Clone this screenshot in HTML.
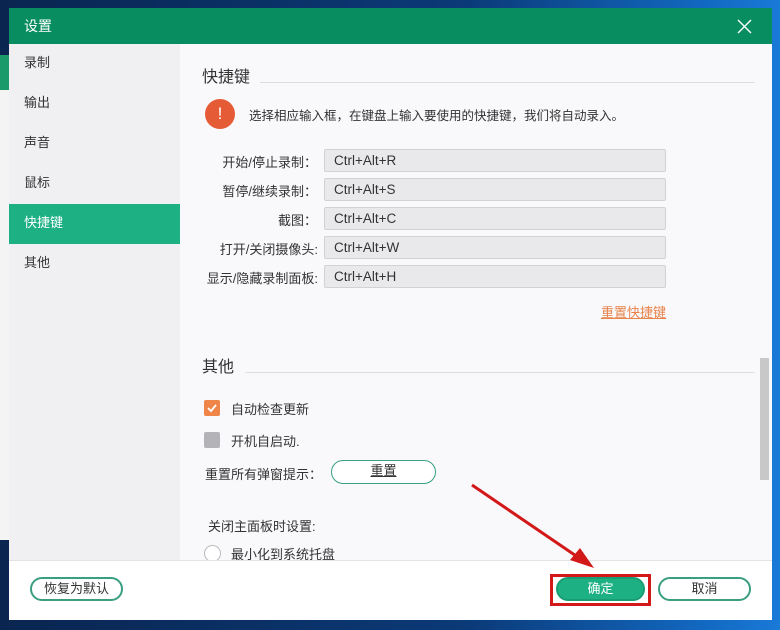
<!DOCTYPE html>
<html><head><meta charset="utf-8"><style>
*{margin:0;padding:0;box-sizing:border-box}
body{width:780px;height:630px;overflow:hidden;position:relative;font-family:"Liberation Sans","Noto Sans CJK SC",sans-serif;background:linear-gradient(90deg,#0a2550 0%,#0b3a78 60%,#1268c0 90%,#1a7ad8 100%);}
.abs{position:absolute}
.dlg{left:9px;top:8px;width:763px;height:612px;background:#f9f8fb}
.title{left:0;top:0;width:763px;height:36px;background:#078d60;color:#fff;font-size:14px;line-height:36px;padding-left:15px}
.side{left:0;top:36px;width:171px;height:516px;background:#f0eff2}
.side div{height:40px;line-height:38px;padding-left:15px;font-size:13px;color:#333}
.side .on{background:#1db083;color:#fff}
.foot{left:0;top:552px;width:763px;height:60px;background:#fff;border-top:1px solid #e4e4e4}
.h{font-size:16px;color:#333}
.line{height:1px;background:#ddd}
.lbl{font-size:13px;color:#333;text-align:right;width:140px}
.inp{width:342px;height:23px;background:#e9e8ea;border:1px solid #d2d2d2;border-radius:2px;font-size:13.5px;color:#333;line-height:21px;padding-left:9px}
.t{font-size:13px;color:#333}
.btn{border:2px solid #3a9e80;border-radius:12px;height:24px;text-align:center;line-height:20px;font-size:13px;color:#333;background:#fff}
</style></head><body>
<div class="abs" style="left:0;top:55px;width:9px;height:35px;background:#1a9a6a"></div>
<div class="abs" style="left:0;top:90px;width:9px;height:450px;background:#f4f4f4"></div>
<div class="abs dlg">
 <div class="abs title">设置<svg class="abs" style="right:20px;top:11px" width="15" height="15"><path d="M1 1L14 14M14 1L1 14" stroke="#fff" stroke-width="1.4"/></svg></div>
 <div class="abs side"><div>录制</div><div>输出</div><div>声音</div><div>鼠标</div><div class="on">快捷键</div><div>其他</div></div>
 <div class="abs h" style="left:193px;top:55px">快捷键</div>
 <div class="abs line" style="left:251px;top:74px;width:495px"></div>
 <div class="abs" style="left:196px;top:91px;width:30px;height:30px;border-radius:50%;background:#e55b36;color:#fff;text-align:center;line-height:30px;font-size:17px">!</div>
 <div class="abs t" style="left:240px;top:97px;font-size:12.5px">选择相应输入框，在键盘上输入要使用的快捷键，我们将自动录入。</div>
 <div class="abs lbl" style="left:168px;top:144px">开始/停止录制：</div><div class="abs inp" style="left:315px;top:141px">Ctrl+Alt+R</div>
 <div class="abs lbl" style="left:168px;top:173px">暂停/继续录制：</div><div class="abs inp" style="left:315px;top:170px">Ctrl+Alt+S</div>
 <div class="abs lbl" style="left:168px;top:202px">截图：</div><div class="abs inp" style="left:315px;top:199px">Ctrl+Alt+C</div>
 <div class="abs lbl" style="left:169px;top:231px">打开/关闭摄像头:</div><div class="abs inp" style="left:315px;top:228px">Ctrl+Alt+W</div>
 <div class="abs lbl" style="left:169px;top:260px">显示/隐藏录制面板:</div><div class="abs inp" style="left:315px;top:257px">Ctrl+Alt+H</div>
 <div class="abs t" style="left:592px;top:294px;color:#e8834a;text-decoration:underline">重置快捷键</div>
 <div class="abs h" style="left:193px;top:345px">其他</div>
 <div class="abs line" style="left:236px;top:364px;width:510px"></div>
 <div class="abs" style="left:195px;top:392px;width:16px;height:16px;border-radius:2px;background:#f0854a"><svg width="16" height="16"><path d="M4 8L7 11L12 5" stroke="#fff" stroke-width="1.8" fill="none"/></svg></div>
 <div class="abs t" style="left:222px;top:391px">自动检查更新</div>
 <div class="abs" style="left:195px;top:424px;width:16px;height:16px;border-radius:2px;background:#b4b3b7"></div>
 <div class="abs t" style="left:222px;top:423px">开机自启动.</div>
 <div class="abs t" style="left:196px;top:456px">重置所有弹窗提示：</div>
 <div class="abs btn" style="left:322px;top:452px;width:105px;border-width:1.5px;text-decoration:underline">重置</div>
 <div class="abs t" style="left:199px;top:508px">关闭主面板时设置:</div>
 <div class="abs" style="left:195px;top:537px;width:17px;height:17px;border-radius:50%;border:1px solid #bbb;background:#fff"></div>
 <div class="abs t" style="left:222px;top:536px">最小化到系统托盘</div>
 <div class="abs" style="left:751px;top:350px;width:9px;height:122px;background:#c8c8c8"></div>
 <div class="abs foot"></div>
 <div class="abs btn" style="left:21px;top:569px;width:93px">恢复为默认</div>
 <div class="abs" style="left:541px;top:566px;width:101px;height:32px;border:3px solid #d21818"></div>
 <div class="abs btn" style="left:547px;top:569px;width:89px;background:#1db083;border-color:#1a9d75;color:#fff">确定</div>
 <div class="abs btn" style="left:649px;top:569px;width:93px">取消</div>
</div>
<svg class="abs" style="left:0;top:0" width="780" height="630"><line x1="472" y1="485" x2="585" y2="562" stroke="#d21818" stroke-width="3"/><path d="M594 568L570 560L580 548Z" fill="#d21818"/></svg>
</body></html>
